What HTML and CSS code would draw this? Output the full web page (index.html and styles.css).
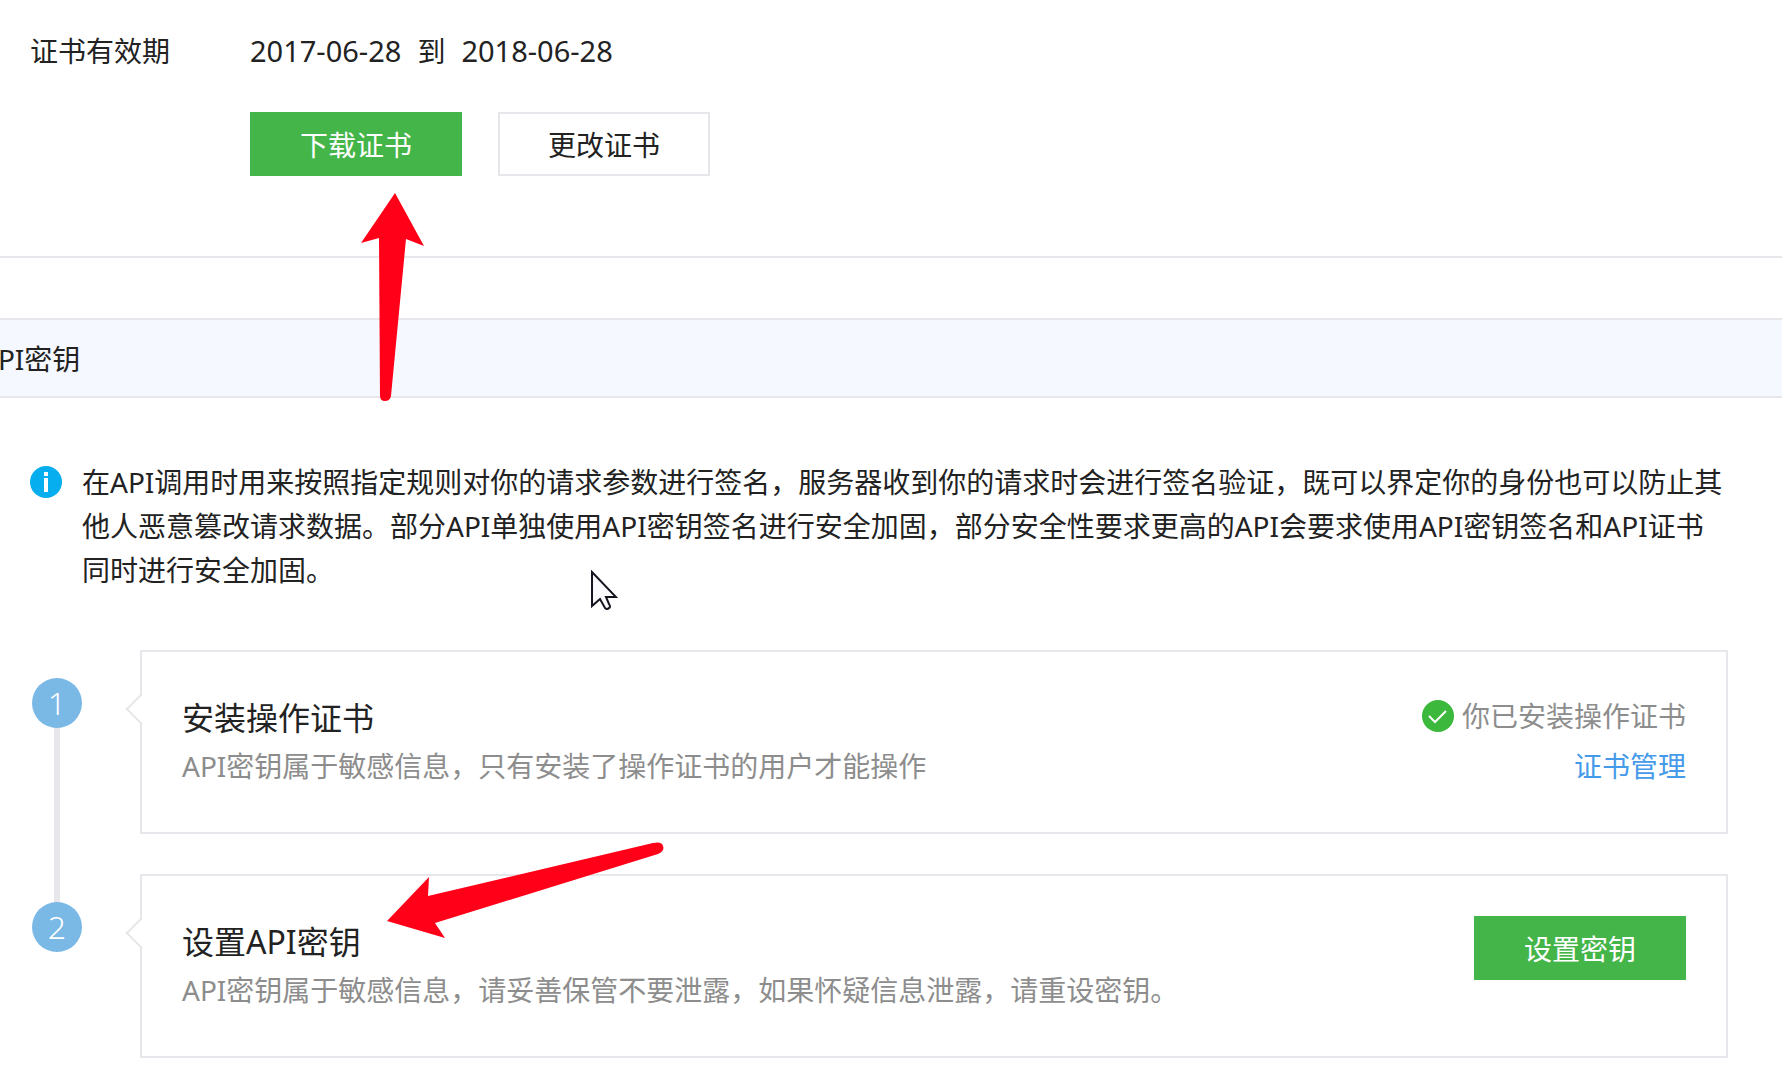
FILE: index.html
```html
<!DOCTYPE html>
<html lang="zh-CN">
<head>
<meta charset="utf-8">
<title>API密钥</title>
<link rel="stylesheet" href="styles.css">
</head>
<body>
<main class="page">
  <section class="cert">
    <dl class="field">
      <dt class="field-label">证书有效期</dt>
      <dd class="field-value"><time class="date">2017-06-28</time><span>到</span><time class="date">2018-06-28</time></dd>
    </dl>
    <div class="actions">
      <button class="btn btn-primary" type="button">下载证书</button>
      <button class="btn btn-default" type="button">更改证书</button>
    </div>
  </section>

  <section class="secret">
    <h2 class="section-title">API密钥</h2>
    <div class="notice">
      <svg class="icon" viewBox="0 0 32 32" aria-hidden="true">
        <circle cx="16" cy="16" r="16" fill="#06aeef"/>
        <path d="M14 6h4v4h-4zM14 12h4v14h-4z" fill="#fff"/>
      </svg>
      <p class="notice-text">在API调用时用来按照指定规则对你的请求参数进行签名，服务器收到你的请求时会进行签名验证，既可以界定你的身份也可以防止其他人恶意篡改请求数据。部分API单独使用API密钥签名进行安全加固，部分安全性要求更高的API会要求使用API密钥签名和API证书同时进行安全加固。</p>
    </div>
    <ol class="steps">
      <li class="step">
        <div class="rail"><span class="num">1</span></div>
        <div class="card">
          <div class="card-text">
            <h3 class="card-title">安装操作证书</h3>
            <p class="card-desc">API密钥属于敏感信息，只有安装了操作证书的用户才能操作</p>
          </div>
          <div class="card-side">
            <p class="status">
              <svg class="icon" viewBox="0 0 32 32" aria-hidden="true">
                <circle cx="16" cy="16" r="16" fill="#3cb93c"/>
                <path d="M7 16l6 6L24 11" fill="none" stroke="#fff" stroke-width="2"/>
              </svg>
              <span>你已安装操作证书</span>
            </p>
            <a class="link" href="#">证书管理</a>
          </div>
        </div>
      </li>
      <li class="step">
        <div class="rail"><span class="num">2</span></div>
        <div class="card">
          <div class="card-text">
            <h3 class="card-title">设置API密钥</h3>
            <p class="card-desc">API密钥属于敏感信息，请妥善保管不要泄露，如果怀疑信息泄露，请重设密钥。</p>
          </div>
          <div class="card-side">
            <button class="btn btn-primary" type="button">设置密钥</button>
          </div>
        </div>
      </li>
    </ol>
  </section>

  <svg class="overlay arrow-up" viewBox="0 0 64 212" aria-hidden="true">
    <path d="M35 3L64 56L46 49L31 206Q30 211 25 211Q20 211 20 206L19 48L1 53Z" fill="#ff0018"/>
  </svg>
  <svg class="overlay arrow-left" viewBox="0 0 280 100" aria-hidden="true">
    <path d="M2 81L44 37L43 56L268 3Q277 1 278 6Q280 11 273 14L50 83L60 98Z" fill="#ff0018"/>
  </svg>
  <svg class="overlay pointer" viewBox="0 0 28 42" aria-hidden="true">
    <path d="M2 2V36L10 29L15 38Q17 40 19 38Q21 37 19 34L16 27H26Z" fill="#fafafc" stroke="#14141e" stroke-width="2"/>
  </svg>
</main>
</body>
</html>
```
FILE: styles.css
```css
* {
  box-sizing: border-box;
}

body {
  margin: 0;
  background: #fff;
  color: #222;
  font-family: "Noto Sans", "Noto Sans CJK SC", sans-serif;
  font-size: 28px;
  line-height: 44px;
}

h2,
h3,
p,
dl,
dd,
ol {
  margin: 0;
  padding: 0;
  font-size: inherit;
  font-weight: 400;
}

.page {
  position: relative;
  overflow: hidden;
  padding-bottom: 20px;
}

.cert {
  padding: 29px 30px 80px;
  border-bottom: 2px solid #e7e7eb;
}

.field {
  display: flex;
}

.field-label {
  width: 220px;
}

.field-value {
  display: flex;
  gap: 16px;
}

.date {
  font-size: 29px;
}

.actions {
  display: flex;
  gap: 36px;
  margin: 39px 0 0 220px;
}

.btn {
  width: 212px;
  height: 64px;
  padding: 2px 0 0;
  border: 2px solid #e7e7eb;
  background: #fff;
  color: #222;
  font: inherit;
}

.btn-primary {
  border-color: #44b549;
  background: #44b549;
  color: #fff;
}

.section-title {
  margin-top: 60px;
  padding: 17px 0 15px;
  border: solid #e7e7eb;
  border-width: 2px 0;
  background: #f6f8ff;
  text-indent: -20px;
}

.notice {
  display: flex;
  gap: 20px;
  padding: 62px 54px 0 30px;
}

.notice-text {
  flex: 1;
}

.icon {
  flex: none;
  width: 32px;
  height: 32px;
  margin-top: 6px;
}

.steps {
  display: grid;
  gap: 40px;
  padding: 58px 54px 0 32px;
  list-style: none;
}

.step {
  display: flex;
  gap: 58px;
}

.rail {
  position: relative;
  width: 50px;
  padding-top: 28px;
}

.step:first-child .rail::before {
  content: "";
  position: absolute;
  top: 50px;
  bottom: -70px;
  left: 22px;
  width: 6px;
  background: #e7e7eb;
}

.num {
  position: relative;
  display: block;
  border-radius: 50%;
  background: #7ab8e6;
  color: #fff;
  font-size: 32px;
  font-weight: 300;
  line-height: 50px;
  text-align: center;
}

.card {
  position: relative;
  display: flex;
  flex: 1;
  justify-content: space-between;
  min-height: 184px;
  padding: 40px;
  border: 2px solid #e7e7eb;
}

.card::before {
  content: "";
  position: absolute;
  top: 46px;
  left: -12px;
  width: 20px;
  height: 20px;
  border: solid #e7e7eb;
  border-width: 0 0 2px 2px;
  background: linear-gradient(45deg, #fff 50%, transparent 50%);
  transform: rotate(45deg);
}

.card-title {
  padding-top: 4px;
  font-size: 32px;
}

.card-desc {
  margin-top: 4px;
  color: #8d8d8d;
}

.card-side {
  display: flex;
  flex-direction: column;
  align-items: flex-end;
  gap: 6px;
}

.status {
  display: flex;
  gap: 8px;
  padding-top: 2px;
  color: #8d8d8d;
}

.link {
  color: #459ae9;
  text-decoration: none;
}

.overlay {
  position: absolute;
  pointer-events: none;
}

.arrow-up {
  top: 190px;
  left: 360px;
  width: 64px;
  height: 212px;
}

.arrow-left {
  top: 840px;
  left: 385px;
  width: 280px;
  height: 100px;
}

.pointer {
  top: 570px;
  left: 590px;
  width: 28px;
  height: 42px;
}
```
